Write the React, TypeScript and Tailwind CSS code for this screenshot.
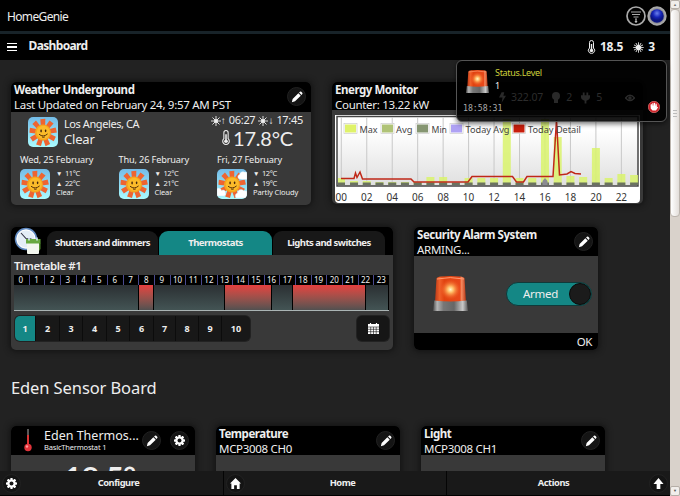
import React from 'react';

const RAYS = [0, 40, 80, 120, 160, 200, 240, 280, 320];

function SunTile({ cloudy = false }: { cloudy?: boolean }) {
  return (
    <svg viewBox="0 0 30 30" className="size-[30px] shrink-0 rounded-[5px]">
      <defs>
        <linearGradient id="sky" x1="0" y1="0" x2="0" y2="1">
          <stop offset="0" stopColor="#74bce8" />
          <stop offset="1" stopColor="#a9fbff" />
        </linearGradient>
      </defs>
      <rect width="30" height="30" fill="url(#sky)" />
      {RAYS.map((a) => (
        <path key={a} d="M12.800 8.500 12.300 2.200 17.300 1.800 17.200 8.500Z" fill="#ee6431" transform={`rotate(${a} 15 15.5)`} />
      ))}
      <circle cx="15" cy="15.5" r="8" fill="#f6a51c" />
      <circle cx="15.3" cy="15.3" r="6.5" fill="#fbbb2a" />
      <ellipse cx="13.1" cy="14" rx=".8" ry="1.4" fill="#43260c" />
      <ellipse cx="17.6" cy="13.8" rx=".8" ry="1.4" fill="#43260c" />
      <path d="M11 17.2q4.2 3.6 8.6-.3M14 19.9q1.4.9 2.8 0" stroke="#5a3208" strokeWidth="1" fill="none" />
      {cloudy && (
        <g fill="#fff" stroke="#b9def2" strokeWidth=".4">
          <path d="M22 10a2.500 2.500 0 0 1 .5-4.500 3.500 3.500 0 0 1 5-2.500L30 3v7.500h-5z" />
          <path d="M0 19.500a3 3 0 0 1 4.500 2 2.500 2.500 0 0 1 4 2.500 2 2 0 0 1-1.500 3H0z" />
          <path d="M19 29a3 3 0 0 1 1.500-5 3.500 3.500 0 0 1 6-2.500l3.500.5v7z" />
        </g>
      )}
    </svg>
  );
}

function Siren({ className }: { className: string }) {
  return (
    <svg viewBox="0 0 35 35" className={className}>
      <defs>
        <linearGradient id="lampside" x1="0" x2="1">
          <stop offset="0" stopColor="#b93a18" />
          <stop offset=".15" stopColor="#f0602a" />
          <stop offset=".3" stopColor="#e04310" />
          <stop offset=".8" stopColor="#e8481a" />
          <stop offset=".86" stopColor="#f58a60" />
          <stop offset="1" stopColor="#b63613" />
        </linearGradient>
        <radialGradient id="lampglow">
          <stop offset="0" stopColor="#fff8c8" />
          <stop offset=".3" stopColor="#ffb862" />
          <stop offset="1" stopColor="#f0501a" stopOpacity="0" />
        </radialGradient>
        <linearGradient id="lampbase" x1="0" x2="1">
          <stop offset="0" stopColor="#4a4a4a" />
          <stop offset=".12" stopColor="#b5b5b5" />
          <stop offset=".3" stopColor="#777" />
          <stop offset=".6" stopColor="#666" />
          <stop offset=".85" stopColor="#c9c9c9" />
          <stop offset="1" stopColor="#555" />
        </linearGradient>
      </defs>
      <path d="M3.500 2.500Q4 1 8 .5q9.500-.8 19 0 4 .4 4.500 2L33 26H2z" fill="url(#lampside)" />
      <path d="M4 3Q17 .2 31 3" stroke="#ff9a70" strokeWidth="1" fill="none" />
      <circle cx="17.500" cy="13.500" r="10.500" fill="url(#lampglow)" />
      <path d="M1.200 24.500q16 2.200 32.600 0L35 35H0z" fill="url(#lampbase)" />
    </svg>
  );
}

function Thermo({ className }: { className: string }) {
  return (
    <svg viewBox="0 0 8 14" className={className} fill="none" stroke="#eee">
      <path d="M2 8V2.500a2 2 0 0 1 4 0V8a3.100 3.100 0 1 1-4 0z" strokeWidth="1" />
      <path d="M4 4v6" strokeWidth="1.400" />
      <circle cx="4" cy="10.500" r="1.700" fill="#eee" stroke="none" />
    </svg>
  );
}

function SunGlyph({ className }: { className: string }) {
  return (
    <svg viewBox="0 0 12 12" className={className}>
      <circle cx="6" cy="6" r="2.800" fill="#eee" />
      <g stroke="#eee" strokeWidth=".9">
        {[0, 30, 60, 90, 120, 150].map((a) => (
          <path key={a} d="M6 .3v11.400" transform={`rotate(${a} 6 6)`} />
        ))}
      </g>
    </svg>
  );
}

function SmallSun({ className = '' }: { className?: string }) {
  return (
    <svg viewBox="0 0 10 10" className={`size-[10px] ${className}`} fill="none" stroke="#eee">
      <circle cx="5" cy="5" r="2" fill="#eee" stroke="none" />
      <path d="M5 0v10M0 5h10M1.500 1.500l7 7M8.500 1.500l-7 7" strokeWidth=".9" />
    </svg>
  );
}

function Pencil() {
  return (
    <svg viewBox="0 0 14 14" className="size-[12px]" fill="#fff">
      <path d="M1 13l.9-3.700L8.600 2.600l2.800 2.800-6.700 6.700zM9.400 1.800l1-1q.8-.6 1.600.1l1.100 1.100q.7.800.1 1.600l-1 1z" />
    </svg>
  );
}

function Gear() {
  return (
    <svg viewBox="0 0 14 14" className="size-[11px]">
      <g fill="#fff">
        {[0, 45, 90, 135].map((a) => (
          <rect key={a} x="5.500" y="0" width="3" height="14" rx=".6" transform={`rotate(${a} 7 7)`} />
        ))}
        <circle cx="7" cy="7" r="5.200" />
      </g>
      <circle cx="7" cy="7" r="2.500" fill="#161616" />
    </svg>
  );
}

function RoundButton({ children }: { children: React.ReactNode }) {
  return (
    <div className="flex size-[19px] shrink-0 items-center justify-center rounded-full border border-[#222] bg-[#141414]">
      {children}
    </div>
  );
}

function Card({ className, children }: { className: string; children: React.ReactNode }) {
  return (
    <section className={`shrink-0 overflow-hidden rounded-[5px] bg-[#393939] shadow-[0_0_6px_1px_#111] ${className}`}>
      {children}
    </section>
  );
}

function Heading({ title, sub, className = 'h-[29px]', edit = true }: {
  title: string; sub: string; className?: string; edit?: boolean;
}) {
  return (
    <header className={`flex justify-between bg-black pl-[3px] pr-[5px] ${className}`}>
      <div className="text-[11.500px] whitespace-nowrap">
        <div className="h-[15px] leading-[16px] font-bold tracking-[-0.450px]">{title}</div>
        <div className="leading-[15px] tracking-[-0.300px]">{sub}</div>
      </div>
      {edit && <div className="pt-[5px]"><RoundButton><Pencil /></RoundButton></div>}
    </header>
  );
}

const DAYS = [
  { day: 'Wed, 25 February', low: '11°C', high: '22°C', sky: 'Clear', cloudy: false },
  { day: 'Thu, 26 February', low: '12°C', high: '21°C', sky: 'Clear', cloudy: false },
  { day: 'Fri, 27 February', low: '12°C', high: '19°C', sky: 'Partly Cloudy', cloudy: true },
];

function Weather() {
  return (
    <Card className="h-[123px] w-[300px]">
      <Heading title="Weather Underground" sub="Last Updated on February 24, 9:57 AM PST" className="h-[30px]" />
      <div className="flex h-[42px] pt-[5px] pl-[17px] pr-[8px]">
        <SunTile />
        <div className="pl-[6px] whitespace-nowrap">
          <div className="text-[11px] leading-[14px] tracking-[-0.420px]">Los Angeles, CA</div>
          <div className="text-[13px] leading-[16px] tracking-[-0.200px]">Clear</div>
        </div>
        <div className="ml-auto flex flex-col items-end whitespace-nowrap">
          <div className="-mt-[3px] flex h-[13px] items-center text-[11px] tracking-[-0.300px]">
            <SmallSun /><span className="w-[8px] text-[10px]">↑</span>06:27
            <SmallSun className="ml-[3px]" /><span className="w-[8px] text-[10px]">↓</span>17:45
          </div>
          <div className="flex h-[21px] items-center pr-[10px] font-['Lato'] text-[20px] tracking-[-0.200px]">
            <Thermo className="mr-[2px] h-[15px] w-[10px]" />17.8°C
          </div>
        </div>
      </div>
      <div className="flex pl-[9px]">
        {DAYS.map((d) => (
          <div key={d.day} className="w-[98.500px] shrink-0 whitespace-nowrap">
            <div className="h-[15px] text-[9.200px] leading-[11px] tracking-[-0.150px]">{d.day}</div>
            <div className="flex">
              <SunTile cloudy={d.cloudy} />
              <div className="pl-[6px] text-[7.500px] leading-[9.500px]">
                <div className="flex gap-[5px] tracking-[-0.450px]"><span className="w-[4px] text-[6.500px]">▼</span>{d.low}</div>
                <div className="flex gap-[5px] tracking-[-0.450px]"><span className="w-[4px] text-[6.500px]">▲</span>{d.high}</div>
                <div className="tracking-[-0.100px]">{d.sky}</div>
              </div>
            </div>
          </div>
        ))}
      </div>
    </Card>
  );
}

const MAX_BARS = [7, 4, 4, 3, 3, 3, 3, 8, 8, 2, 7, 7, 7, 66, 7, 7, 66, 48, 9, 8, 37, 7, 11, 10];
const LEGEND = [
  { x: 10, tx: 24.500, w: 18, label: 'Max', c: '#dff26a' },
  { x: 47, tx: 61, w: 16.500, label: 'Avg', c: '#b0c377' },
  { x: 82, tx: 96.500, w: 15.500, label: 'Min', c: '#869672' },
  { x: 116, tx: 130.500, w: 44, label: 'Today Avg', c: '#afa2f4' },
  { x: 178.500, tx: 193, w: 53, label: 'Today Detail', c: '#c81e0c' },
];

function Energy() {
  return (
    <Card className="h-[122px] w-[311px]">
      <Heading title="Energy Monitor" sub="Counter: 13.22 kW" className="h-[28px]" edit={false} />
      <div className="px-[3px] pt-[5px]">
        <svg viewBox="0 0 305 88" className="h-[88px] w-[305px] rounded-b-[4px] bg-white">
          <defs>
            <linearGradient id="plot" x1="0" y1="0" x2="0" y2="1">
              <stop offset=".2" stopColor="#fff" />
              <stop offset="1" stopColor="#dfdfdf" />
            </linearGradient>
          </defs>
          <rect x="2" y="1.500" width="301" height="69.500" fill="url(#plot)" stroke="#444" strokeWidth="1.500" />
          {MAX_BARS.map((h, i) => (
            <g key={i}>
              {i % 2 === 0 && <path d={`M${6.300 + i * 12.730} 2v68`} stroke="#c8c8c8" strokeWidth="1" />}
              <rect x={i === 0 ? 3 : 2.300 + i * 12.730} y={70 - h} width={i === 0 ? 7 : 8} height={h} fill="#d9f36c" fillOpacity=".85" />
              <rect x={i === 0 ? 3 : 2.300 + i * 12.730} y="67.500" width={i === 0 ? 7 : 8} height="2.500" fill="#6b7360" />
            </g>
          ))}
          <path d="M207.500 70v-4l2.500-3 2.500 3v4z" fill="#8b8b93" />
          <path d="M6 63.500H19L20.500 58 22 62.500 25 57 27.500 64H76L79 67H133L137 61.500H177.500L181.500 67H188.500L192 61.500H218L221.500 5 224.500 60 232 59 236 56.500 240 58.500 246 59" fill="none" stroke="#c02818" strokeWidth="1.500" />
          {LEGEND.map((l) => (
            <g key={l.label}>
              <rect x={l.x - 1} y="8.500" width="13" height="10" fill="#fff" stroke="#ccc" strokeWidth=".7" />
              <rect x={l.x} y="9.500" width="11" height="8" fill={l.c} />
              <text x={l.tx} y="17.500" fontSize="9.500" fill="#444" textLength={l.w} lengthAdjust="spacingAndGlyphs">{l.label}</text>
            </g>
          ))}
          {MAX_BARS.map((_, i) => i % 2 === 0 && (
            <text key={i} x={6.300 + i * 12.730} y="85.500" fontSize="10" fill="#333" textAnchor="middle">{String(i).padStart(2, '0')}</text>
          ))}
        </svg>
      </div>
    </Card>
  );
}

const TABS = [
  { label: 'Shutters and dimmers', c: 'w-[111px] bg-[#181818]' },
  { label: 'Thermostats', c: 'w-[113px] bg-[#148785]' },
  { label: 'Lights and switches', c: 'w-[112px] bg-[#181818]' },
];
const PAGES = ['w-[21px] bg-[#148785]', 'w-[24px]', 'w-[23px]', 'w-[24px]', 'w-[23px]', 'w-[24px]', 'w-[22px]', 'w-[23px]', 'w-[23px]', 'w-[28px]'];
const SLOTS = [
  { c: 'w-[125px]', on: false }, { c: 'w-[15px]', on: true }, { c: 'w-[71px]', on: false }, { c: 'w-[47px]', on: true },
  { c: 'w-[21px]', on: false }, { c: 'w-[73px]', on: true }, { c: 'w-[23px]', on: false },
];

function Timetable() {
  return (
    <Card className="h-[123px] w-[382px]">
      <div className="flex h-[28px] items-end gap-px bg-black pl-[3px]">
        <svg viewBox="0 0 28 28" className="mr-[4px] size-[28px]">
          <circle cx="12" cy="12" r="10.500" fill="#cfdded" stroke="#5f88bf" strokeWidth="1.500" />
          <circle cx="12" cy="12" r="9" fill="#e4edf6" stroke="#fff" />
          <path d="M7 6l5 5.500 5.500.5" stroke="#334" strokeWidth="1.100" fill="none" />
          <rect x="13" y="13" width="12" height="14" rx="1" fill="#f3f7ef" />
          <path d="M12 12h14.500v4.500H12z" fill="#67a93f" />
          <path d="M26.500 16v6L25 24v-8z" fill="#4f8a2d" />
          <path d="M15 10.500v3M23 10.500v3" stroke="#def" strokeWidth="1.500" />
        </svg>
        {TABS.map((t) => (
          <div key={t.label} className={`flex h-[24px] items-center justify-center rounded-t-[9px] pt-px text-[9.500px] font-bold tracking-[-0.520px] whitespace-nowrap ${t.c}`}>{t.label}</div>
        ))}
      </div>
      <div className="h-[20px] pl-[3px] pt-[2px] text-[11.500px] leading-[17px] font-semibold tracking-[-0.480px]">Timetable #1</div>
      <div className="mx-[3px] flex h-[10px] w-[375px] bg-black">
        {Array.from({ length: 24 }, (_, h) => (
          <div key={h} className="flex-1 border-r border-[#4a4a90] pr-px text-center text-[8px] leading-[10px] last:border-0">{h}</div>
        ))}
      </div>
      <div className="mx-[3px] flex h-[26px] w-[375px] border-b border-[#aab4b4]">
        {SLOTS.map((s, i) => (
          <div key={i} className={`border-r border-black bg-linear-to-b ${s.c} ${s.on ? 'from-[#e53e3e] to-[#525050]' : 'from-[#2b3033] to-[#435454]'}`} />
        ))}
      </div>
      <div className="flex justify-between pl-[4px] pr-[4px] pt-[5px] text-[9px] font-bold">
        <div className="flex h-[25px] overflow-hidden rounded-[5px] bg-[#181818] shadow-[0_0_0_1px_#222]">
          {PAGES.map((p, i) => (
            <div key={i} className={`flex items-center justify-center border-r border-[#0c0c0c] last:border-0 ${p}`}>{i + 1}</div>
          ))}
        </div>
        <div className="flex h-[25px] w-[32px] items-center justify-center rounded-[5px] bg-[#161616] shadow-[0_0_0_1px_#222]">
          <svg viewBox="0 0 11 11" className="size-[11px]">
            <path d="M0 1h11v10H0z" fill="#fff" />
            <path d="M0 4h11M0 6.300h11M0 8.700h11M2.700 4v7M5.500 4v7M8.200 4v7" stroke="#161616" strokeWidth=".6" />
            <path d="M2.500 0v2M8.500 0v2" stroke="#fff" strokeWidth="1.200" />
          </svg>
        </div>
      </div>
    </Card>
  );
}

function Security() {
  return (
    <Card className="flex h-[123px] w-[184px] flex-col">
      <Heading title="Security Alarm System" sub="ARMING..." />
      <div className="flex flex-1 items-center justify-between pl-[19px] pr-[6px]">
        <Siren className="mt-[-3px] size-[35px]" />
        <div className="mt-[-2px] flex h-[24px] w-[86px] items-center justify-between rounded-full border border-[#0f3a3a] bg-[#148785] pl-[16px] text-[11.500px] tracking-[-0.300px]">
          Armed<span className="size-[22px] rounded-full border border-[#0a0a0a] bg-[#1b1b1b]" />
        </div>
      </div>
      <div className="h-[17px] bg-black pr-[6px] text-right text-[11.500px] leading-[17px] tracking-[-0.400px]">OK</div>
    </Card>
  );
}

function SensorCard({ title, sub }: { title: string; sub: string }) {
  return (
    <Card className="h-[123px] w-[184px]">
      <Heading title={title} sub={sub} />
    </Card>
  );
}

function ThermostatCard() {
  return (
    <Card className="h-[123px] w-[184px]">
      <header className="flex h-[29px] bg-black">
        <svg viewBox="0 0 10 24" className="mt-[2px] ml-[12px] h-[24px] w-[10px]">
          <path d="M5 1v8" stroke="#777" strokeWidth="1.500" />
          <path d="M5 7v11" stroke="#d33" strokeWidth="2" />
          <circle cx="5" cy="19.500" r="3.700" fill="#e0333a" />
          <circle cx="4" cy="18.500" r="1.200" fill="#ff9a9a" />
        </svg>
        <div className="w-[98px] pt-[2px] pl-[11px] whitespace-nowrap">
          <div className="text-[12.500px] leading-[15px]">Eden Thermos...</div>
          <div className="text-[7.500px] leading-[9px] tracking-[-0.180px]">BasicThermostat 1</div>
        </div>
        <div className="flex gap-[9px] pt-[5px] pl-[11px]">
          <RoundButton><Pencil /></RoundButton>
          <RoundButton><Gear /></RoundButton>
        </div>
      </header>
      <div className="pt-[3px] pl-[53px] font-['Lato'] text-[31px] leading-[38px] font-bold tracking-[-0.500px]">18.5°</div>
    </Card>
  );
}

function Alert() {
  return (
    <div className="absolute top-[60px] left-[456px] flex h-[62px] w-[211px] rounded-[6px] border border-[#555] bg-black/90 shadow-[0_2px_5px_#0008]">
      <div className="w-[38px] pt-[9px] pl-[9px]">
        <Siren className="h-[23px] w-[23px]" />
        <div className="-ml-[3px] pt-[9px] font-['DejaVu_Sans_Mono'] text-[8.200px] leading-[12px] text-[#aaa]">18:58:31</div>
      </div>
      <div className="pt-[5px] text-[9px] leading-[13px]">
        <div className="tracking-[-0.300px] text-[#cfd13c]">Status.Level</div>
        <div>1</div>
        <div className="-mt-px flex h-[13px] items-center text-[10.500px] tracking-[-0.100px] text-[#2c2c2c]">
          <svg viewBox="0 0 8 12" className="ml-[4px] mr-[5px] h-[11px] w-[7px]" fill="#292929"><path d="M3 0h3L5 4h3L3 12l1-6H0z" /></svg>
          322.07
          <svg viewBox="0 0 8 12" className="ml-[9px] mr-[6px] h-[12px] w-[8px]" fill="#292929"><circle cx="4" cy="4" r="4" /><path d="M2 7h4v4H2z" /></svg>
          2
          <svg viewBox="0 0 10 12" className="ml-[9px] mr-[6px] h-[12px] w-[9px]" fill="#292929"><path d="M2 0h2v3h2V0h2v3h2v2q0 3-4 4v3H4V9Q0 8 0 5V3h2z" /></svg>
          5
          <svg viewBox="0 0 10 8" className="ml-[23px] h-[8px] w-[10px]" fill="none" stroke="#2c2c2c" strokeWidth="1.400"><path d="M.5 4Q5-1.500 9.500 4 5 9 .5 4z" /><circle cx="5" cy="4" r="1" /></svg>
        </div>
      </div>
      <svg viewBox="0 0 12 12" className="absolute right-[6px] bottom-[8px] size-[12px]">
        <circle cx="6" cy="6" r="5.700" fill="#cf2027" stroke="#f08a88" strokeWidth=".6" />
        <path d="M3.300 5V3.500M4.900 5V2.500M6.500 5V2.300M8.100 6V3.200" stroke="#fff" strokeWidth="1.200" strokeLinecap="round" />
        <path d="M2.700 4.500h6v2l1-.8.4.6L8 9.500H4.500L2.700 7.500z" fill="#fff" />
      </svg>
    </div>
  );
}

function FooterItem({ label, icon, className, after }: { label: string; icon?: React.ReactNode; className: string; after?: React.ReactNode }) {
  return (
    <div className={`flex items-center border-[#050505] ${className}`}>
      {icon && <RoundButton>{icon}</RoundButton>}
      <span className="flex-1 text-center">{label}</span>
      {after && <RoundButton>{after}</RoundButton>}
    </div>
  );
}

export default function App() {
  return (
    <div className="relative flex h-[496px] w-[680px] overflow-hidden bg-[#222] font-['Noto_Sans',sans-serif] text-[#eee]">
      <div className="flex w-[670px] flex-col">
        <header className="flex h-[34px] items-center justify-between border-b-[3px] border-[#182329] bg-black pl-[7px] pr-[3px] text-[12px]">
          <span className="pt-[2px] tracking-[-0.650px]">HomeGenie</span>
          <div className="flex gap-px">
            <svg viewBox="0 0 20 20" className="size-[20px]" fill="none" stroke="#aaa">
              <circle cx="10" cy="10" r="9" strokeWidth="1.700" />
              <path d="M5 6h10M6 8.500h8M7.500 11h5M9 13.200h2" strokeWidth="1.200" />
              <circle cx="10" cy="15.500" r="1.200" fill="#bbb" stroke="none" />
            </svg>
            <svg viewBox="0 0 20 20" className="size-[20px]">
              <defs><radialGradient id="led" cy=".3"><stop offset="0" stopColor="#6a80ec" /><stop offset=".6" stopColor="#1524b8" /><stop offset="1" stopColor="#0b1580" /></radialGradient></defs>
              <circle cx="10" cy="10" r="8.700" fill="#8c8c94" stroke="#a8a8a8" strokeWidth="2" />
              <circle cx="10" cy="10" r="6.800" fill="url(#led)" />
            </svg>
          </div>
        </header>
        <div className="flex h-[26px] shrink-0 items-center bg-black pl-[7px] pr-[15px] text-[12px] font-bold">
          <div className="mr-[11.500px] flex w-[10px] flex-col gap-[2px]">
            <span className="h-[1.500px] bg-white" /><span className="h-[1.500px] bg-white" /><span className="h-[1.500px] bg-white" />
          </div>
          <span className="-mt-[2px] tracking-[-0.650px]">Dashboard</span>
          <Thermo className="ml-auto h-[14px] w-[9px]" />
          <span className="ml-[4px] tracking-[-0.200px]">18.5</span>
          <SunGlyph className="mr-[4px] ml-[10px] size-[11px]" />3
        </div>
        <main className="flex min-h-0 flex-1 flex-col overflow-hidden pl-[11px]">
          <div className="flex gap-[21px] pt-[22px]"><Weather /><Energy /></div>
          <div className="flex gap-[21px] pt-[22px]"><Timetable /><Security /></div>
          <h2 className="h-[76px] shrink-0 pt-[25px] text-[16.500px] leading-[25px] tracking-[-0.100px]">Eden Sensor Board</h2>
          <div className="flex gap-[21px]">
            <ThermostatCard />
            <SensorCard title="Temperature" sub="MCP3008 CH0" />
            <SensorCard title="Light" sub="MCP3008 CH1" />
          </div>
        </main>
        <footer className="flex h-[25px] shrink-0 border-b border-black bg-[#191919] text-[9.300px] font-bold tracking-[-0.450px]">
          <FooterItem label="Configure" icon={<Gear />} className="w-[224px] border-r pl-[2px] pr-[7px]" />
          <FooterItem label="Home" className="w-[223px] border-r pl-[2px] pr-[6px]" icon={<svg viewBox="0 0 12 12" className="size-[11px]" fill="#fff"><path d="M6 0l6 6h-1.500v6h-3V8h-3v4h-3V6H0z" /></svg>} />
          <FooterItem label="Actions" className="w-[223px] pl-[11px] pr-[2px]" after={<svg viewBox="0 0 12 12" className="size-[11px]" fill="#fff"><path d="M6 0l5.500 6.500H8V12H4V6.500H.5z" /></svg>} />
        </footer>
      </div>
      <div className="flex w-[10px] flex-col bg-[#d9d2cb]">
        <div className="flex h-[9px] items-center justify-center rounded-[2px] border border-[#b5aea7] bg-[#f1eeeb] text-[4px] text-[#777]">▲</div>
        <div className="flex h-[208px] flex-col items-center justify-center gap-[2px] rounded-[4px] border border-[#bbb4ad] bg-linear-to-r from-[#fff] to-[#e3deda]">
          <span className="h-px w-[4px] bg-[#bbb]" /><span className="h-px w-[4px] bg-[#bbb]" /><span className="h-px w-[4px] bg-[#bbb]" />
        </div>
        <div className="mt-auto flex h-[10px] items-center justify-center rounded-[2px] border border-[#b5aea7] bg-[#f1eeeb] text-[4px] text-[#555]">▼</div>
      </div>
      <Alert />
    </div>
  );
}
